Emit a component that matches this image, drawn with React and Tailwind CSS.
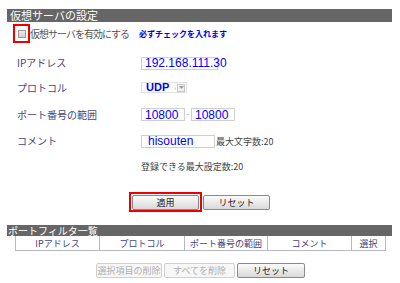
export default function App() {
  const jp = { fontFamily: '"Noto Sans CJK JP", "Liberation Sans", sans-serif' };
  const label = "w-[124px] shrink-0 text-[10px] leading-none text-[#46467a]";
  const input = "h-[13px] border border-[#cfcfcf] bg-white flex items-center px-[3px] text-[12px] leading-none text-[#0000ff]";
  const btn =
    "h-[15px] border border-[#8a8a8a] rounded-[2px] bg-gradient-to-b from-[#fbfbfb] to-[#d9d9d9] flex items-center justify-center text-[9px] leading-none text-[#222]";
  const btnOff =
    "h-[15px] border border-[#d0d0d0] rounded-[2px] bg-[#f7f7f7] flex items-center justify-center text-[9px] leading-none text-[#b0b0b0]";

  return (
    <div className="w-[400px] h-[283px] bg-white overflow-hidden" style={jp}>
      <div className="flex flex-col pl-[7px] pt-[9px]">
        {/* 仮想サーバの設定 */}
        <div className="w-[385px] h-[13px] bg-[#666666] flex items-center pl-[3px] text-[11px] leading-none text-white">
          仮想サーバの設定
        </div>

        <div className="mt-[2px] h-[19px] flex items-center">
          <div className="ml-[6px] w-[17px] h-[19px] border-2 border-[#ee0000] flex items-center justify-center">
            <div className="w-[8px] h-[8px] border border-[#9a9a9a] bg-gradient-to-b from-[#e8e8e8] to-[#cfcfcf]" />
          </div>
          <span className="text-[10px] tracking-[-1px] leading-none text-[#555]">仮想サーバを有効にする</span>
          <span className="ml-[10px] text-[8px] leading-none font-bold text-[#0000ee]">必ずチェックを入れます</span>
        </div>

        <div className="mt-[14px] h-[12px] flex items-center pl-[10px]">
          <span className={label}>IPアドレス</span>
          <div className={`${input} w-[77px] px-[1px]`} style={{ fontFamily: '"Liberation Sans", sans-serif' }}>
            192.168.111.30
          </div>
        </div>

        <div className="mt-[13px] h-[11px] flex items-center pl-[10px]">
          <span className={label}>プロトコル</span>
          <div className="w-[46px] h-[11px] border border-[#e0e0e0] bg-white flex items-center justify-between pl-[4px] pr-[1px]">
            <span className="text-[11px] font-bold leading-none text-[#0000ff]" style={{ fontFamily: '"Liberation Sans", sans-serif' }}>
              UDP
            </span>
            <div className="flex items-center gap-[1px]">
              <span className="text-[7px] leading-none text-[#aaa]">›</span>
              <div className="w-[8px] h-[8px] border border-[#c8c8c8] bg-[#f0f0f0] flex items-center justify-center">
                <svg width="5" height="3" viewBox="0 0 5 3"><path d="M0 0h5L2.5 3z" fill="#999" /></svg>
              </div>
            </div>
          </div>
        </div>

        <div className="mt-[15px] h-[13px] flex items-center pl-[10px]" style={{ fontFamily: '"Liberation Sans", sans-serif' }}>
          <span className={label} style={jp}>ポート番号の範囲</span>
          <div className={`${input} w-[44px]`}>10800</div>
          <span className="mx-[1px] w-[4px] text-[9px] text-[#aaa] leading-none">-</span>
          <div className={`${input} w-[44px]`}>10800</div>
        </div>

        <div className="mt-[14px] h-[12px] flex items-center pl-[10px]">
          <span className={label}>コメント</span>
          <div className={`${input} w-[74px] pl-[6px]`} style={{ fontFamily: '"Liberation Sans", sans-serif' }}>
            hisouten
          </div>
          <span className="ml-[1px] text-[9px] leading-none text-[#444]">最大文字数:20</span>
        </div>

        <div className="mt-[14px] h-[10px] flex items-center pl-[134px]">
          <span className="text-[9px] leading-none text-[#444]">登録できる最大設定数:20</span>
        </div>

        <div className="mt-[21px] h-[20px] flex items-center pl-[122px]">
          <div className="w-[73px] h-[20px] border-2 border-[#ee0000] flex items-center justify-center">
            <div className={`${btn} w-[67px]`}>適用</div>
          </div>
          <div className={`${btn} w-[67px] ml-[1px]`}>リセット</div>
        </div>

        {/* ポートフィルタ一覧 */}
        <div className="mt-[13px] w-[385px] h-[11px] bg-[#666666] flex items-center pl-[1px] text-[10px] leading-none text-white">
          ポートフィルタ一覧
        </div>
        <div className="ml-[8px] w-[371px] h-[15px] flex border border-t-0 border-[#b8b8c8] text-[9px] leading-none text-[#46467a]">
          <div className="w-[84px] flex items-center justify-center border-r border-[#b8b8c8]">IPアドレス</div>
          <div className="w-[85px] flex items-center justify-center border-r border-[#b8b8c8]">プロトコル</div>
          <div className="w-[83px] flex items-center justify-center border-r border-[#b8b8c8]">ポート番号の範囲</div>
          <div className="w-[84px] flex items-center justify-center border-r border-[#b8b8c8]">コメント</div>
          <div className="flex-1 flex items-center justify-center">選択</div>
        </div>

        <div className="mt-[12px] flex items-center pl-[89px] gap-[2px]">
          <div className={`${btnOff} w-[66px]`}>選択項目の削除</div>
          <div className={`${btnOff} w-[71px]`}>すべてを削除</div>
          <div className={`${btn} w-[68px]`}>リセット</div>
        </div>
      </div>
    </div>
  );
}
